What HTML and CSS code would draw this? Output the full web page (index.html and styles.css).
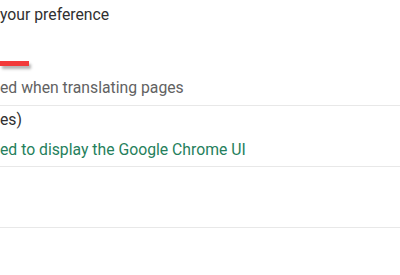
FILE: index.html
```html
<!doctype html>
<html>
<head>
  <link rel="stylesheet" href="styles.css">
</head>
<body>
  <div class="intro">
    <div class="line">your preference</div>
    <div class="marker"></div>
  </div>

  <div class="row hintRow">
    <div class="line hint">ed when translating pages</div>
  </div>

  <div class="row langRow">
    <div class="line">es)</div>
    <div class="line uiNote">ed to display the Google Chrome UI</div>
  </div>

  <div class="row emptyRow"></div>
</body>
</html>
```

FILE: styles.css
```css
body{
  margin: 0;
  background: #ffffff;
  font-family: Roboto, "Liberation Sans", sans-serif;
  font-size: 15.75px;
  color: #303030;
}
.line{
  line-height: 20px;
  white-space: nowrap;
}
.intro{
  padding-top: 5px;
}
.marker{
  width: 29px;
  height: 5px;
  margin-top: 36px;
  background: #f23a3a;
  box-shadow: 2px 3px 3px rgba(0, 0, 0, 0.3);
}
.row{
  border-bottom: 1px solid #e8e8e8;
}
.hintRow{
  margin-top: 12px;
  padding-bottom: 7px;
}
.hint{
  color: #626262;
}
.langRow{
  padding-top: 4px;
  padding-bottom: 6px;
}
.uiNote{
  margin-top: 10px;
  color: #257f5c;
}
.emptyRow{
  height: 60px;
}
```
